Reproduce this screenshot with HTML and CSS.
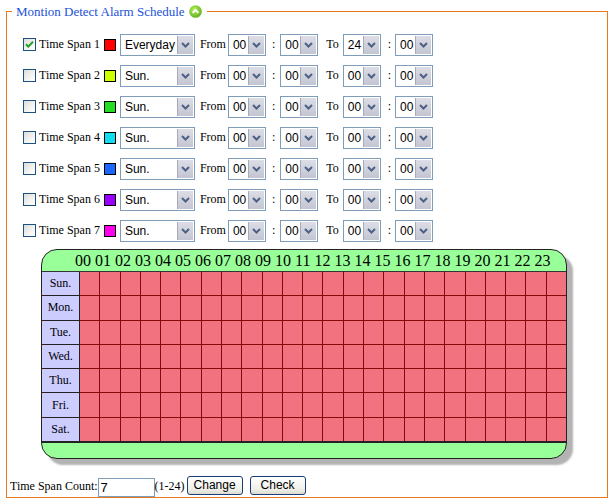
FILE: index.html
```html
<!DOCTYPE html>
<html>
<head>
<meta charset="utf-8">
<link rel="stylesheet" href="styles.css">
</head>
<body>
<fieldset class="box">
  <legend class="lg"><span class="lg-text">Montion Detect Alarm Schedule</span><span class="lg-icon"><svg width="13" height="13" viewBox="0 0 13 13"><defs><radialGradient id="g" cx="0.4" cy="0.35" r="0.7"><stop offset="0" stop-color="#b6ef5a"/><stop offset="1" stop-color="#5fae1c"/></radialGradient></defs><circle cx="6.5" cy="6.5" r="6.3" fill="url(#g)"/><path d="M3.6 7.9 L6.5 5 L9.4 7.9" fill="none" stroke="#fff" stroke-width="2"/></svg></span></legend>

  <div class="rows">
    <div class="row">
      <span class="cb"><svg width="11" height="11" viewBox="0 0 11 11"><path d="M2 5.2 L4.3 7.6 L9 2.8" fill="none" stroke="#21a121" stroke-width="2"/></svg></span>
      <span class="lbl">Time Span 1</span>
      <span class="sq c1"></span>
      <span class="sel wd"><span class="v">Everyday</span><span class="btn"><svg width="9" height="6" viewBox="0 0 9 6"><path d="M1 1 L4.5 4.5 L8 1" fill="none" stroke="#4d6185" stroke-width="2"/></svg></span></span>
      <span class="txt from">From</span>
      <span class="sel hr m1"><span class="v">00</span><span class="btn"><svg width="9" height="6" viewBox="0 0 9 6"><path d="M1 1 L4.5 4.5 L8 1" fill="none" stroke="#4d6185" stroke-width="2"/></svg></span></span>
      <span class="txt col1">:</span>
      <span class="sel hr m2"><span class="v">00</span><span class="btn"><svg width="9" height="6" viewBox="0 0 9 6"><path d="M1 1 L4.5 4.5 L8 1" fill="none" stroke="#4d6185" stroke-width="2"/></svg></span></span>
      <span class="txt to">To</span>
      <span class="sel hr m3"><span class="v">24</span><span class="btn"><svg width="9" height="6" viewBox="0 0 9 6"><path d="M1 1 L4.5 4.5 L8 1" fill="none" stroke="#4d6185" stroke-width="2"/></svg></span></span>
      <span class="txt col2">:</span>
      <span class="sel hr m4"><span class="v">00</span><span class="btn"><svg width="9" height="6" viewBox="0 0 9 6"><path d="M1 1 L4.5 4.5 L8 1" fill="none" stroke="#4d6185" stroke-width="2"/></svg></span></span>
    </div>
    <div class="row">
      <span class="cb"></span>
      <span class="lbl">Time Span 2</span>
      <span class="sq c2"></span>
      <span class="sel wd"><span class="v">Sun.</span><span class="btn"><svg width="9" height="6" viewBox="0 0 9 6"><path d="M1 1 L4.5 4.5 L8 1" fill="none" stroke="#4d6185" stroke-width="2"/></svg></span></span>
      <span class="txt from">From</span>
      <span class="sel hr m1"><span class="v">00</span><span class="btn"><svg width="9" height="6" viewBox="0 0 9 6"><path d="M1 1 L4.5 4.5 L8 1" fill="none" stroke="#4d6185" stroke-width="2"/></svg></span></span>
      <span class="txt col1">:</span>
      <span class="sel hr m2"><span class="v">00</span><span class="btn"><svg width="9" height="6" viewBox="0 0 9 6"><path d="M1 1 L4.5 4.5 L8 1" fill="none" stroke="#4d6185" stroke-width="2"/></svg></span></span>
      <span class="txt to">To</span>
      <span class="sel hr m3"><span class="v">00</span><span class="btn"><svg width="9" height="6" viewBox="0 0 9 6"><path d="M1 1 L4.5 4.5 L8 1" fill="none" stroke="#4d6185" stroke-width="2"/></svg></span></span>
      <span class="txt col2">:</span>
      <span class="sel hr m4"><span class="v">00</span><span class="btn"><svg width="9" height="6" viewBox="0 0 9 6"><path d="M1 1 L4.5 4.5 L8 1" fill="none" stroke="#4d6185" stroke-width="2"/></svg></span></span>
    </div>
    <div class="row">
      <span class="cb"></span>
      <span class="lbl">Time Span 3</span>
      <span class="sq c3"></span>
      <span class="sel wd"><span class="v">Sun.</span><span class="btn"><svg width="9" height="6" viewBox="0 0 9 6"><path d="M1 1 L4.5 4.5 L8 1" fill="none" stroke="#4d6185" stroke-width="2"/></svg></span></span>
      <span class="txt from">From</span>
      <span class="sel hr m1"><span class="v">00</span><span class="btn"><svg width="9" height="6" viewBox="0 0 9 6"><path d="M1 1 L4.5 4.5 L8 1" fill="none" stroke="#4d6185" stroke-width="2"/></svg></span></span>
      <span class="txt col1">:</span>
      <span class="sel hr m2"><span class="v">00</span><span class="btn"><svg width="9" height="6" viewBox="0 0 9 6"><path d="M1 1 L4.5 4.5 L8 1" fill="none" stroke="#4d6185" stroke-width="2"/></svg></span></span>
      <span class="txt to">To</span>
      <span class="sel hr m3"><span class="v">00</span><span class="btn"><svg width="9" height="6" viewBox="0 0 9 6"><path d="M1 1 L4.5 4.5 L8 1" fill="none" stroke="#4d6185" stroke-width="2"/></svg></span></span>
      <span class="txt col2">:</span>
      <span class="sel hr m4"><span class="v">00</span><span class="btn"><svg width="9" height="6" viewBox="0 0 9 6"><path d="M1 1 L4.5 4.5 L8 1" fill="none" stroke="#4d6185" stroke-width="2"/></svg></span></span>
    </div>
    <div class="row">
      <span class="cb"></span>
      <span class="lbl">Time Span 4</span>
      <span class="sq c4"></span>
      <span class="sel wd"><span class="v">Sun.</span><span class="btn"><svg width="9" height="6" viewBox="0 0 9 6"><path d="M1 1 L4.5 4.5 L8 1" fill="none" stroke="#4d6185" stroke-width="2"/></svg></span></span>
      <span class="txt from">From</span>
      <span class="sel hr m1"><span class="v">00</span><span class="btn"><svg width="9" height="6" viewBox="0 0 9 6"><path d="M1 1 L4.5 4.5 L8 1" fill="none" stroke="#4d6185" stroke-width="2"/></svg></span></span>
      <span class="txt col1">:</span>
      <span class="sel hr m2"><span class="v">00</span><span class="btn"><svg width="9" height="6" viewBox="0 0 9 6"><path d="M1 1 L4.5 4.5 L8 1" fill="none" stroke="#4d6185" stroke-width="2"/></svg></span></span>
      <span class="txt to">To</span>
      <span class="sel hr m3"><span class="v">00</span><span class="btn"><svg width="9" height="6" viewBox="0 0 9 6"><path d="M1 1 L4.5 4.5 L8 1" fill="none" stroke="#4d6185" stroke-width="2"/></svg></span></span>
      <span class="txt col2">:</span>
      <span class="sel hr m4"><span class="v">00</span><span class="btn"><svg width="9" height="6" viewBox="0 0 9 6"><path d="M1 1 L4.5 4.5 L8 1" fill="none" stroke="#4d6185" stroke-width="2"/></svg></span></span>
    </div>
    <div class="row">
      <span class="cb"></span>
      <span class="lbl">Time Span 5</span>
      <span class="sq c5"></span>
      <span class="sel wd"><span class="v">Sun.</span><span class="btn"><svg width="9" height="6" viewBox="0 0 9 6"><path d="M1 1 L4.5 4.5 L8 1" fill="none" stroke="#4d6185" stroke-width="2"/></svg></span></span>
      <span class="txt from">From</span>
      <span class="sel hr m1"><span class="v">00</span><span class="btn"><svg width="9" height="6" viewBox="0 0 9 6"><path d="M1 1 L4.5 4.5 L8 1" fill="none" stroke="#4d6185" stroke-width="2"/></svg></span></span>
      <span class="txt col1">:</span>
      <span class="sel hr m2"><span class="v">00</span><span class="btn"><svg width="9" height="6" viewBox="0 0 9 6"><path d="M1 1 L4.5 4.5 L8 1" fill="none" stroke="#4d6185" stroke-width="2"/></svg></span></span>
      <span class="txt to">To</span>
      <span class="sel hr m3"><span class="v">00</span><span class="btn"><svg width="9" height="6" viewBox="0 0 9 6"><path d="M1 1 L4.5 4.5 L8 1" fill="none" stroke="#4d6185" stroke-width="2"/></svg></span></span>
      <span class="txt col2">:</span>
      <span class="sel hr m4"><span class="v">00</span><span class="btn"><svg width="9" height="6" viewBox="0 0 9 6"><path d="M1 1 L4.5 4.5 L8 1" fill="none" stroke="#4d6185" stroke-width="2"/></svg></span></span>
    </div>
    <div class="row">
      <span class="cb"></span>
      <span class="lbl">Time Span 6</span>
      <span class="sq c6"></span>
      <span class="sel wd"><span class="v">Sun.</span><span class="btn"><svg width="9" height="6" viewBox="0 0 9 6"><path d="M1 1 L4.5 4.5 L8 1" fill="none" stroke="#4d6185" stroke-width="2"/></svg></span></span>
      <span class="txt from">From</span>
      <span class="sel hr m1"><span class="v">00</span><span class="btn"><svg width="9" height="6" viewBox="0 0 9 6"><path d="M1 1 L4.5 4.5 L8 1" fill="none" stroke="#4d6185" stroke-width="2"/></svg></span></span>
      <span class="txt col1">:</span>
      <span class="sel hr m2"><span class="v">00</span><span class="btn"><svg width="9" height="6" viewBox="0 0 9 6"><path d="M1 1 L4.5 4.5 L8 1" fill="none" stroke="#4d6185" stroke-width="2"/></svg></span></span>
      <span class="txt to">To</span>
      <span class="sel hr m3"><span class="v">00</span><span class="btn"><svg width="9" height="6" viewBox="0 0 9 6"><path d="M1 1 L4.5 4.5 L8 1" fill="none" stroke="#4d6185" stroke-width="2"/></svg></span></span>
      <span class="txt col2">:</span>
      <span class="sel hr m4"><span class="v">00</span><span class="btn"><svg width="9" height="6" viewBox="0 0 9 6"><path d="M1 1 L4.5 4.5 L8 1" fill="none" stroke="#4d6185" stroke-width="2"/></svg></span></span>
    </div>
    <div class="row">
      <span class="cb"></span>
      <span class="lbl">Time Span 7</span>
      <span class="sq c7"></span>
      <span class="sel wd"><span class="v">Sun.</span><span class="btn"><svg width="9" height="6" viewBox="0 0 9 6"><path d="M1 1 L4.5 4.5 L8 1" fill="none" stroke="#4d6185" stroke-width="2"/></svg></span></span>
      <span class="txt from">From</span>
      <span class="sel hr m1"><span class="v">00</span><span class="btn"><svg width="9" height="6" viewBox="0 0 9 6"><path d="M1 1 L4.5 4.5 L8 1" fill="none" stroke="#4d6185" stroke-width="2"/></svg></span></span>
      <span class="txt col1">:</span>
      <span class="sel hr m2"><span class="v">00</span><span class="btn"><svg width="9" height="6" viewBox="0 0 9 6"><path d="M1 1 L4.5 4.5 L8 1" fill="none" stroke="#4d6185" stroke-width="2"/></svg></span></span>
      <span class="txt to">To</span>
      <span class="sel hr m3"><span class="v">00</span><span class="btn"><svg width="9" height="6" viewBox="0 0 9 6"><path d="M1 1 L4.5 4.5 L8 1" fill="none" stroke="#4d6185" stroke-width="2"/></svg></span></span>
      <span class="txt col2">:</span>
      <span class="sel hr m4"><span class="v">00</span><span class="btn"><svg width="9" height="6" viewBox="0 0 9 6"><path d="M1 1 L4.5 4.5 L8 1" fill="none" stroke="#4d6185" stroke-width="2"/></svg></span></span>
    </div>
  </div>

  <div class="sched">
    <div class="hdr">00 01 02 03 04 05 06 07 08 09 10 11 12 13 14 15 16 17 18 19 20 21 22 23</div>
    <div class="gbody" id="gbody"></div>
    <div class="ftr"></div>
  </div>

  <div class="bottom">
    <span class="txt">Time Span Count:</span><span class="inp">7</span><span class="txt">(1-24)</span>
    <span class="bt b1">Change</span><span class="bt b2">Check</span>
  </div>
</fieldset>
<script src="app.js"></script>
</body>
</html>
```

FILE: app.js
```js
(function () {
  var days = ["Sun.", "Mon.", "Tue.", "Wed.", "Thu.", "Fri.", "Sat."];
  var g = document.getElementById("gbody");
  var html = "";
  for (var d = 0; d < 7; d++) {
    html += '<div class="day">' + days[d] + '</div>';
    for (var h = 0; h < 24; h++) html += '<div class="cell"></div>';
  }
  g.innerHTML = html;
})();
```

FILE: styles.css
```css
html, body {
  margin: 0;
  padding: 0;
  background: #fff;
}
body {
  font-family: "Liberation Serif", "Times New Roman", serif;
  font-size: 12px;
  color: #000;
}
.box {
  margin: 0 0 0 6px;
  width: 602px;
  height: 498px;
  box-sizing: border-box;
  border: 1px solid #e77a1f;
  padding: 0 0 0 3px;
  min-width: 0;
}
.lg {
  margin-left: 2px;
  padding: 0 5px 0 4px;
  height: 22px;
  line-height: 22px;
  color: #1a52d8;
  font-size: 13px;
  white-space: nowrap;
}
.lg-text {
  vertical-align: middle;
}
.lg-icon {
  display: inline-block;
  width: 13px;
  height: 13px;
  margin-left: 4px;
  vertical-align: middle;
  position: relative;
  top: -1px;
}
.lg-icon svg { display: block; }

.rows {
  padding-left: 13px;
  margin-top: 7px;
}
.row {
  display: flex;
  align-items: center;
  height: 31px;
}
.cb {
  width: 13px;
  height: 13px;
  box-sizing: border-box;
  border: 1px solid #1c5180;
  background: linear-gradient(135deg, #dcdcd7 0%, #f4f4f2 60%, #fff 100%);
  display: flex;
  align-items: center;
  justify-content: center;
}
.cb svg { display: block; }
.lbl {
  margin-left: 3px;
  white-space: nowrap;
}
.sq {
  width: 12px;
  height: 12px;
  box-sizing: border-box;
  border: 1px solid #000;
  margin-left: 4px;
}
.c1 { background: #ff0000; }
.c2 { background: #ccff00; }
.c3 { background: #22dd22; }
.c4 { background: #11ddee; }
.c5 { background: #1a66ff; }
.c6 { background: #9900ff; }
.c7 { background: #ff00ee; }

.sel {
  display: flex;
  height: 22px;
  box-sizing: border-box;
  border: 1px solid #7f9db9;
  background: #fff;
  font-family: "Liberation Sans", Arial, sans-serif;
  font-size: 12px;
}
.sel .v {
  flex: 1;
  padding-left: 4px;
  line-height: 20px;
  white-space: nowrap;
  overflow: hidden;
}
.sel .btn {
  width: 16px;
  margin: 1px 1px 1px 0;
  box-sizing: border-box;
  border-left: 1px solid #a9aab8;
  background: linear-gradient(#dcdde6, #c3c5d2);
  display: flex;
  align-items: center;
  justify-content: center;
}
.sel .btn svg { display: block; }
.wd { width: 75px; margin-left: 4px; }
.hr { width: 38px; }
.from { margin-left: 5px; }
.m1 { margin-left: 2px; }
.col1 { margin-left: 6px; }
.m2 { margin-left: 5px; }
.to { margin-left: 8px; }
.m3 { margin-left: 4px; }
.col2 { margin-left: 7px; }
.m4 { margin-left: 4px; }
.txt { white-space: nowrap; }

.sched {
  margin: 3px 0 0 31px;
  width: 526px;
  box-sizing: border-box;
  border: 1px solid #222;
  border-radius: 16px;
  background: #99ff99;
  box-shadow: 6px 6px 2px #b3b3b3;
  overflow: hidden;
}
.hdr {
  height: 21px;
  line-height: 22px;
  font-size: 16px;
  padding-left: 33px;
  white-space: nowrap;
}
.gbody {
  display: grid;
  grid-template-columns: 37px repeat(24, 1fr);
  grid-template-rows: repeat(7, 1fr);
  gap: 1px;
  height: 172px;
  box-sizing: border-box;
  background: #850a0a;
  border-top: 1px solid #333;
  border-bottom: 2px solid #222;
}
.day {
  background: #ccccff;
  text-align: center;
  font-size: 12px;
  display: flex;
  align-items: center;
  justify-content: center;
  box-shadow: 1px 0 0 #222, 1px 1px 0 #222;
}
.cell {
  background: #f2727f;
}
.ftr {
  height: 15px;
}

.bottom {
  display: flex;
  align-items: center;
  margin-top: 16px;
  height: 22px;
}
.inp {
  width: 57px;
  height: 19px;
  box-sizing: border-box;
  border: 1px solid #7f9db9;
  font-family: "Liberation Sans", Arial, sans-serif;
  font-size: 13px;
  line-height: 17px;
  padding-left: 2px;
  margin-top: 2px;
}
.bt {
  height: 19px;
  box-sizing: border-box;
  border: 1px solid #1c3c74;
  border-radius: 3px;
  background: linear-gradient(#ffffff, #f0f0ea 70%, #dcdcd2);
  font-family: "Liberation Sans", Arial, sans-serif;
  font-size: 12px;
  line-height: 17px;
  text-align: center;
  margin-top: -2px;
}
.b1 { width: 56px; margin-left: 2px; }
.b2 { width: 56px; margin-left: 7px; }
```
